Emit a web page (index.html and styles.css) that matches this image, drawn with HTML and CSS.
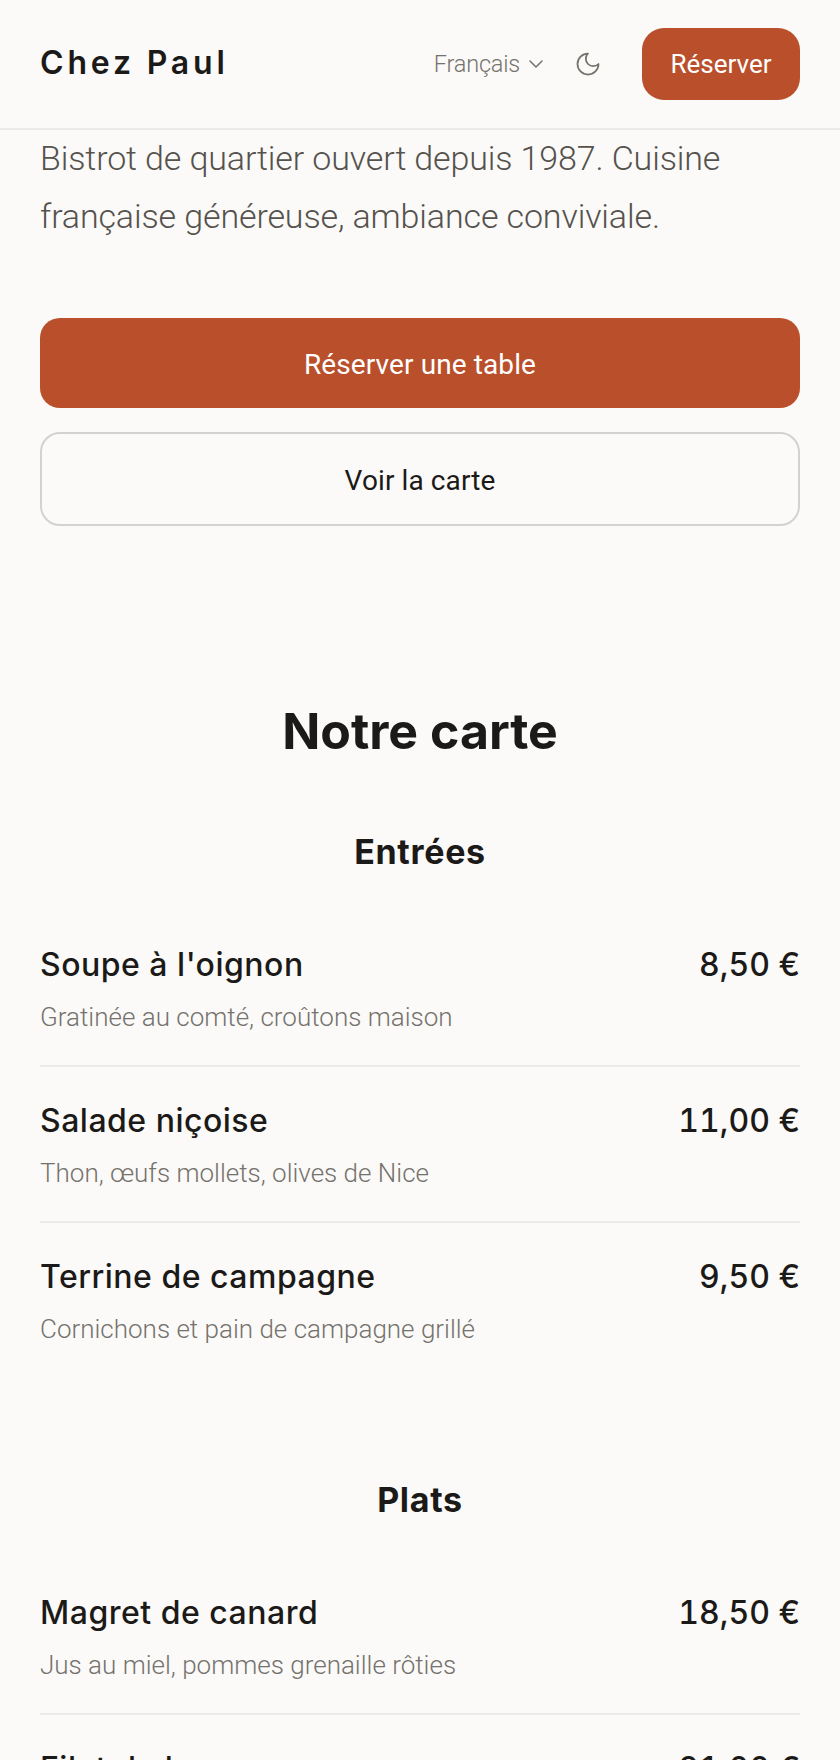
FILE: index.html
```html
<!DOCTYPE html>
<html lang="fr">
<head>
<meta charset="utf-8">
<title>Chez Paul</title>
<link rel="stylesheet" href="styles.css">
</head>
<body>
<header class="topbar">
  <div class="logo">Chez Paul</div>
  <div class="actions">
    <span class="lang">Français
      <svg class="chev" viewBox="0 0 24 24" fill="none" stroke="currentColor" stroke-width="1.5" stroke-linecap="round" stroke-linejoin="round"><path d="m6 9 6 6 6-6"/></svg>
    </span>
    <svg class="moon" viewBox="0 0 24 24" fill="none" stroke="currentColor" stroke-width="1.5" stroke-linecap="round" stroke-linejoin="round"><path d="M12 3a6 6 0 0 0 9 9 9 9 0 1 1-9-9Z"/></svg>
    <a class="btn-small">Réserver</a>
  </div>
</header>
<main>
  <section class="hero">
    <p class="lead">Bistrot de quartier ouvert depuis 1987. Cuisine française généreuse, ambiance conviviale.</p>
    <div class="cta">
      <a class="btn btn-primary">Réserver une table</a>
      <a class="btn btn-outline">Voir la carte</a>
    </div>
  </section>
  <section class="menu">
    <h2 class="title">Notre carte</h2>
    <div class="group">
      <h3 class="group-title">Entrées</h3>
      <div class="item"><div class="row"><span class="name">Soupe à l'oignon</span><span class="price">8,50 €</span></div><p class="desc">Gratinée au comté, croûtons maison</p></div>
      <div class="item"><div class="row"><span class="name">Salade niçoise</span><span class="price">11,00 €</span></div><p class="desc">Thon, œufs mollets, olives de Nice</p></div>
      <div class="item"><div class="row"><span class="name">Terrine de campagne</span><span class="price">9,50 €</span></div><p class="desc">Cornichons et pain de campagne grillé</p></div>
    </div>
    <div class="group">
      <h3 class="group-title">Plats</h3>
      <div class="item"><div class="row"><span class="name">Magret de canard</span><span class="price">18,50 €</span></div><p class="desc">Jus au miel, pommes grenaille rôties</p></div>
      <div class="item"><div class="row"><span class="name">Filet de bar</span><span class="price">21,00 €</span></div><p class="desc">Sauce vierge, légumes de saison</p></div>
    </div>
  </section>
</main>
</body>
</html>
```
FILE: styles.css
```css
* { box-sizing: border-box; }
html, body { margin: 0; padding: 0; }
body {
  height: 1760px;
  overflow: hidden;
  background: #fbfaf8;
  color: #1c1a18;
  font-family: "Roboto", sans-serif;
}
.topbar {
  height: 130px;
  padding: 0 40px;
  display: flex;
  align-items: center;
  justify-content: space-between;
  border-bottom: 2px solid #ece9e6;
}
.logo {
  padding-bottom: 4px;
  font-family: "Inter", sans-serif;
  font-size: 32px;
  font-weight: 600;
  letter-spacing: 3.8px;
}
.actions { display: flex; align-items: center; }
.lang {
  display: flex;
  align-items: center;
  gap: 4px;
  font-size: 23.5px;
  font-weight: 300;
  letter-spacing: -0.2px;
  color: #75726d;
}
.chev { width: 24px; height: 24px; }
.moon { width: 28px; height: 28px; color: #75726d; margin: 0 40px 0 26px; }
.btn-small {
  height: 72px;
  width: 158px;
  display: flex;
  align-items: center;
  justify-content: center;
  background: #b9502b;
  color: #fff;
  font-size: 26px;
  border-radius: 22px;
}
.hero { padding: 0 40px; }
.lead {
  margin: -1px 0 0;
  font-size: 34px;
  line-height: 58px;
  font-weight: 300;
  letter-spacing: -0.13px;
  color: #55524d;
}
.cta { margin-top: 73px; display: flex; flex-direction: column; gap: 24px; }
.btn {
  display: flex;
  align-items: center;
  justify-content: center;
  padding-top: 2px;
  border-radius: 20px;
  font-size: 28px;
  letter-spacing: 0.1px;
}
.btn-primary { height: 90px; background: #b9502b; color: #fff; }
.btn-outline { height: 94px; border: 2px solid #d4d2cf; color: #1c1a18; }
.menu { padding: 0 40px; margin-top: 175px; }
.title {
  margin: 0 0 69px;
  text-align: center;
  font-family: "Inter", sans-serif;
  font-size: 50px;
  line-height: 60px;
  font-weight: 700;
}
.group-title {
  margin: 0 0 37px;
  text-align: center;
  font-family: "Inter", sans-serif;
  font-size: 34px;
  line-height: 44px;
  font-weight: 700;
  letter-spacing: 0.7px;
}
.group { margin-bottom: 101px; }
.item { padding: 32px 0 30px; border-bottom: 2px solid #ece9e6; }
.group .item:last-child { border-bottom: 0; }
.row { display: flex; justify-content: space-between; }
.name, .price {
  font-family: "Inter", sans-serif;
  font-size: 32px;
  line-height: 44px;
  font-weight: 500;
  letter-spacing: 0.5px;
}
.price { font-variant-numeric: tabular-nums; letter-spacing: 0; }
.desc {
  margin: 12px 0 0;
  font-size: 26px;
  line-height: 36px;
  font-weight: 300;
  color: #75726d;
}
```
